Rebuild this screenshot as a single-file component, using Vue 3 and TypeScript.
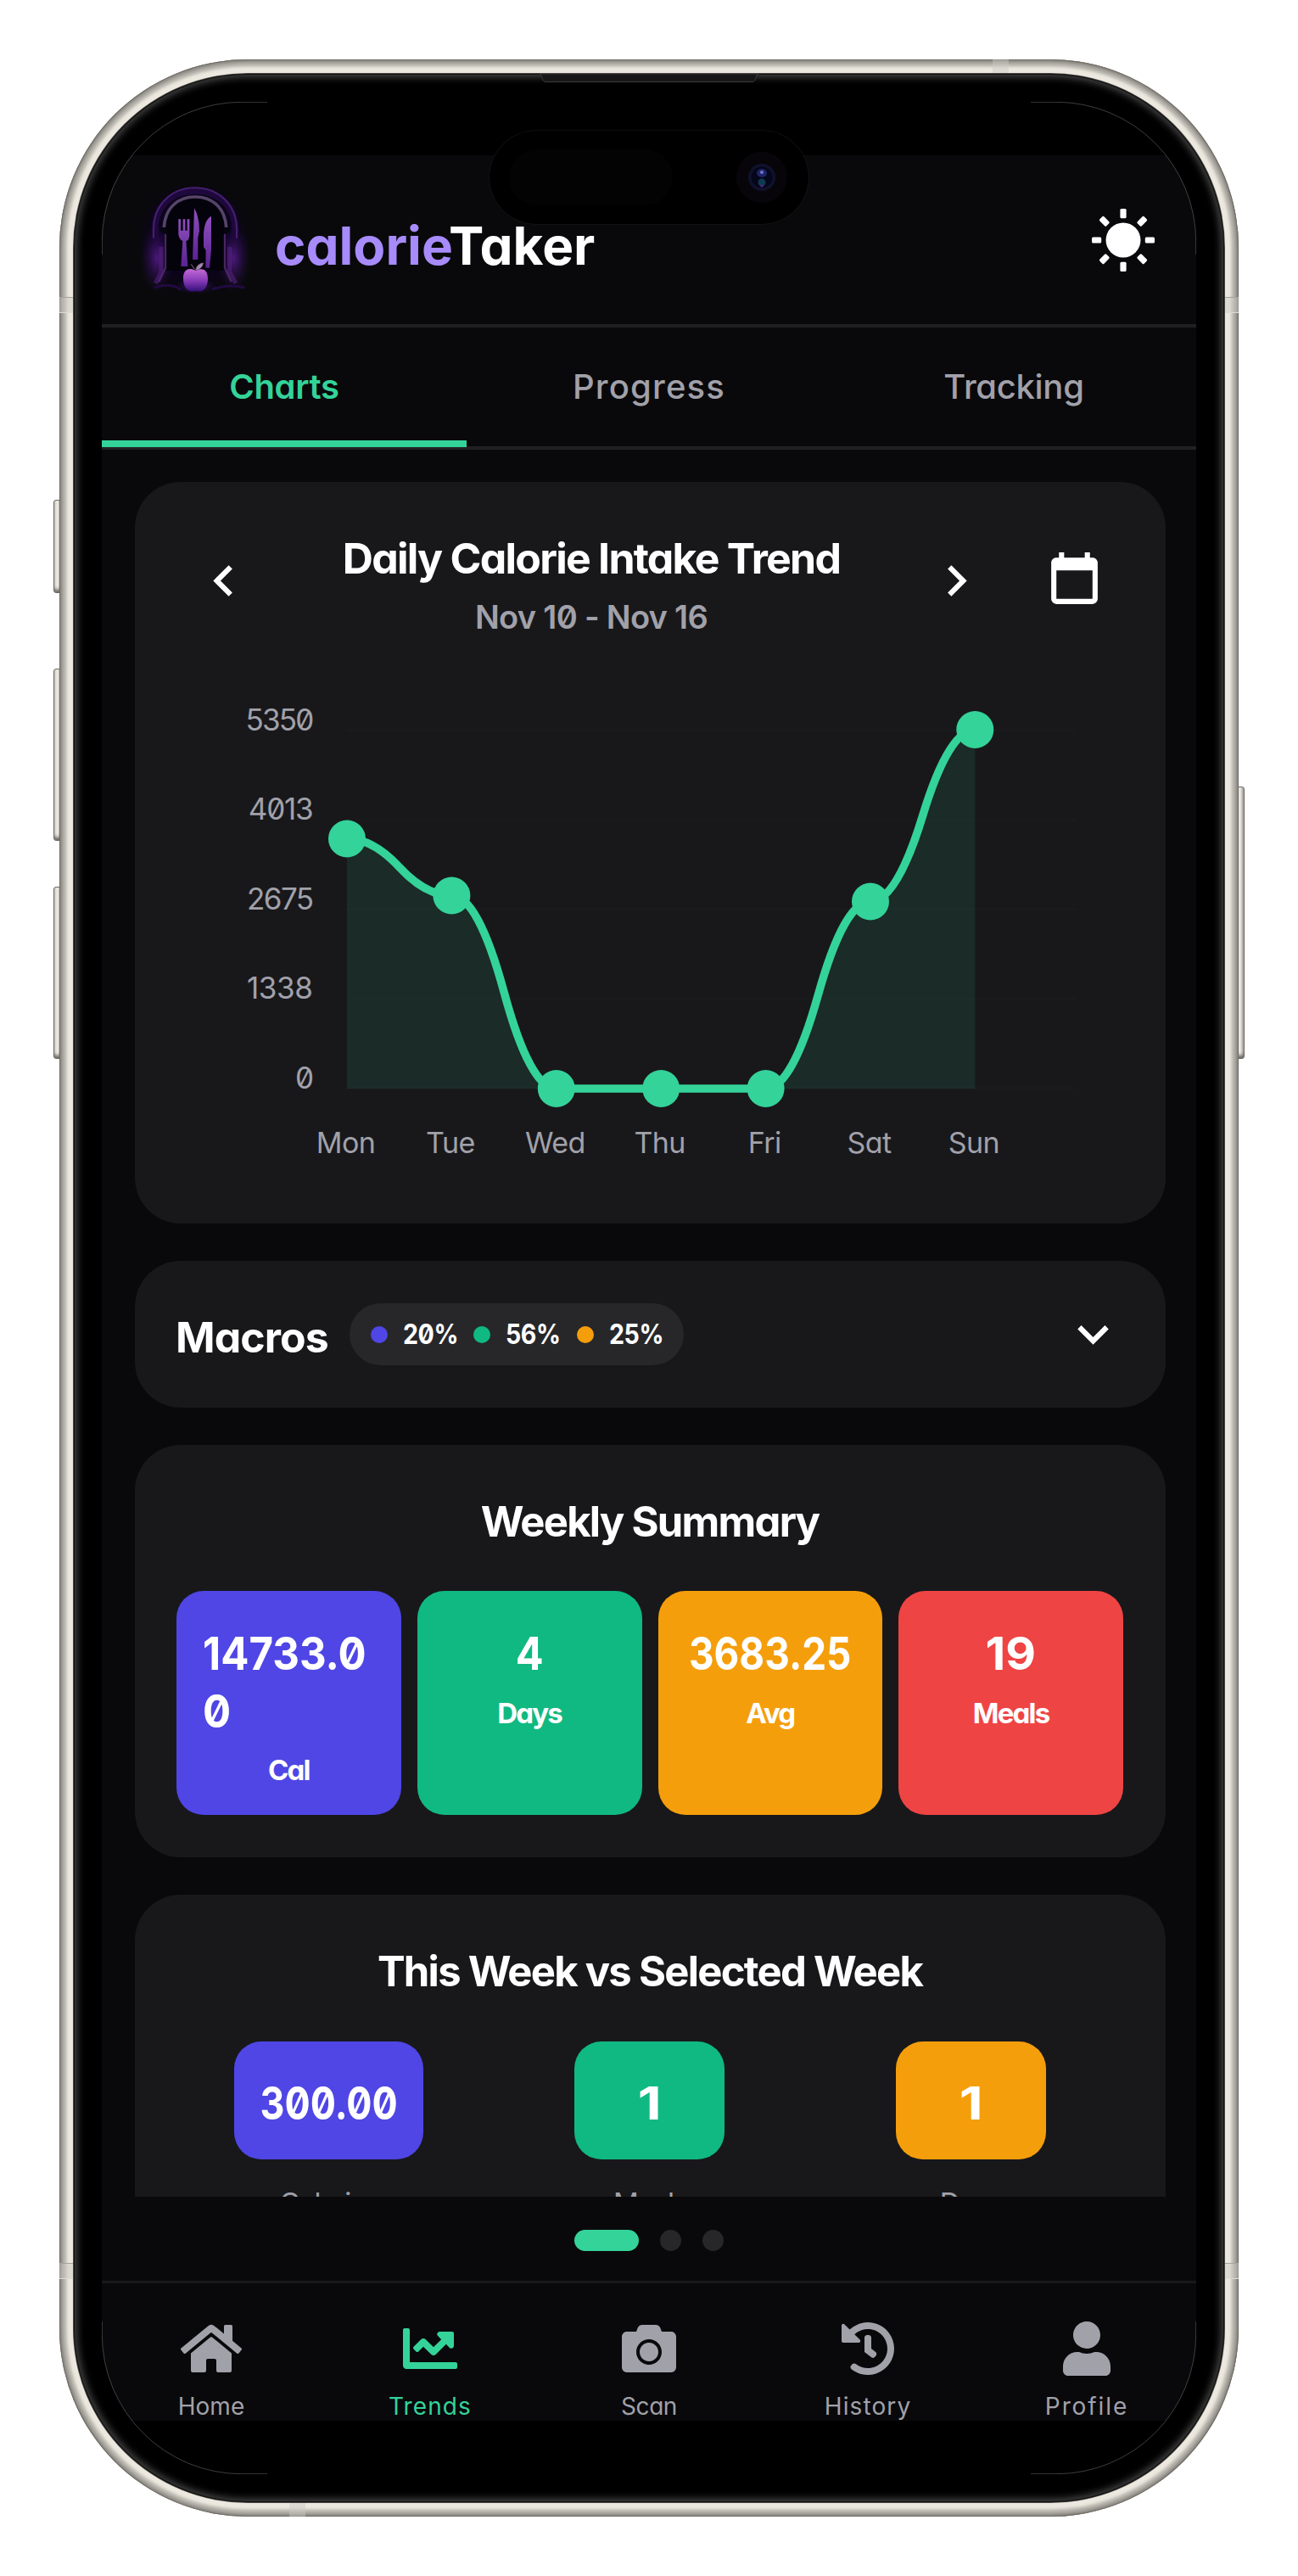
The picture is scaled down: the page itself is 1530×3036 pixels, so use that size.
<script setup lang="ts">
interface Stat { value: string; label: string; color: string; scale: number; wrap?: boolean }
interface NavItem { label: string; width: number; view: string; path: string; spacing: number; active?: boolean }

const tabs = [
  { label: 'Charts', spacing: -0.3, active: true },
  { label: 'Progress', spacing: 1.2 },
  { label: 'Tracking', spacing: -0.3 },
]

const axis = [
  { label: '5350', y: 860.5, spacing: -1.8 },
  { label: '4013', y: 966, spacing: -1.2 },
  { label: '2675', y: 1071.5, spacing: -1.6 },
  { label: '1338', y: 1177, spacing: -0.4 },
  { label: '0', y: 1282.5, spacing: -1.6 },
]

const points = [
  { day: 'Mon', x: 409, y: 988.5 },
  { day: 'Tue', x: 532.4, y: 1055.5 },
  { day: 'Wed', x: 655.8, y: 1283 },
  { day: 'Thu', x: 779.2, y: 1283 },
  { day: 'Fri', x: 902.6, y: 1283 },
  { day: 'Sat', x: 1026, y: 1062.5 },
  { day: 'Sun', x: 1149.3, y: 860 },
]

// Each segment is a pair of quadratic curves that meet at its midpoint
const line = points.slice(1).reduce((d, p, i) => {
  const a = points[i]
  const mx = (a.x + p.x) / 2
  const my = (a.y + p.y) / 2
  return `${d} Q ${(mx + a.x) / 2} ${a.y} ${mx} ${my} Q ${(mx + p.x) / 2} ${p.y} ${p.x} ${p.y}`
}, `M ${points[0].x} ${points[0].y}`)
const area = `${line} L 1149.3 1283 L 409 1283 Z`

const macros = [
  { value: '20%', color: '#4f46e5' },
  { value: '56%', color: '#10b981' },
  { value: '25%', color: '#f59e0b' },
]

const weekly: Stat[] = [
  { value: '14733.00', label: 'Cal', color: '#4f46e5', scale: 0.91, wrap: true },
  { value: '4', label: 'Days', color: '#10b981', scale: 0.9 },
  { value: '3683.25', label: 'Avg', color: '#f59e0b', scale: 0.85 },
  { value: '19', label: 'Meals', color: '#ef4444', scale: 1.02 },
]

const compare: Stat[] = [
  { value: '300.00', label: 'Calories', color: '#4f46e5', scale: 0.83 },
  { value: '1', label: 'Meals', color: '#10b981', scale: 1.2 },
  { value: '1', label: 'Days', color: '#f59e0b', scale: 1.2 },
]

const nav: NavItem[] = [
  { label: 'Home', width: 72, view: '0 0 576 512', spacing: 0, path: 'M280.37 148.26L96 300.11V464a16 16 0 0 0 16 16l112.06-.29a16 16 0 0 0 15.92-16V368a16 16 0 0 1 16-16h64a16 16 0 0 1 16 16v95.64a16 16 0 0 0 16 16.05L464 480a16 16 0 0 0 16-16V300L295.67 148.26a12.19 12.19 0 0 0-15.3 0zM571.6 251.47L488 182.56V44.05a12 12 0 0 0-12-12h-56a12 12 0 0 0-12 12v72.61L318.47 43a48 48 0 0 0-61 0L4.34 251.47a12 12 0 0 0-1.6 16.9l25.5 31A12 12 0 0 0 45.15 301l235.22-193.74a12.19 12.19 0 0 1 15.3 0L530.9 301a12 12 0 0 0 16.9-1.6l25.5-31a12 12 0 0 0-1.7-16.93z' },
  { label: 'Trends', width: 64, view: '0 0 512 512', spacing: 1.1, active: true, path: 'M496 384H64V80c0-8.84-7.16-16-16-16H16C7.16 64 0 71.16 0 80v336c0 17.67 14.33 32 32 32h464c8.84 0 16-7.16 16-16v-32c0-8.84-7.16-16-16-16zM464 96H345.94c-21.38 0-32.09 25.85-16.97 40.97l32.4 32.4L288 242.75l-73.37-73.37c-12.5-12.5-32.76-12.5-45.25 0l-68.69 68.69c-6.25 6.25-6.25 16.38 0 22.63l22.62 22.62c6.25 6.25 16.38 6.25 22.63 0L192 237.25l73.37 73.37c12.5 12.5 32.76 12.5 45.25 0l96-96 32.4 32.4c15.12 15.12 40.97 4.41 40.97-16.97V112c.01-8.84-7.15-16-15.99-16z' },
  { label: 'Scan', width: 64, view: '0 0 512 512', spacing: -0.4, path: 'M512 144v288c0 26.5-21.5 48-48 48H48c-26.5 0-48-21.5-48-48V144c0-26.5 21.5-48 48-48h88l12.3-32.9c7-18.7 24.9-31.1 44.9-31.1h125.5c20 0 37.9 12.4 44.9 31.1L376 96h88c26.5 0 48 21.5 48 48zM376 288c0-66.2-53.8-120-120-120s-120 53.8-120 120 53.8 120 120 120 120-53.8 120-120zm-32 0c0 48.5-39.5 88-88 88s-88-39.5-88-88 39.5-88 88-88 88 39.5 88 88z' },
  { label: 'History', width: 64, view: '0 0 512 512', spacing: 1.1, path: 'M504 255.531c.253 136.64-111.18 248.372-247.82 248.468-59.015.042-113.223-20.53-155.822-54.911-11.077-8.94-11.905-25.541-1.839-35.607l11.267-11.267c8.609-8.609 22.353-9.551 31.891-1.984C173.062 425.135 212.781 440 256 440c101.705 0 184-82.311 184-184 0-101.705-82.311-184-184-184-48.814 0-93.149 18.969-126.068 49.932l50.754 50.754c10.08 10.08 2.941 27.314-11.313 27.314H24c-8.837 0-16-7.163-16-16V38.627c0-14.254 17.234-21.393 27.314-11.314l49.372 49.372C129.209 34.136 189.552 8 256 8c136.81 0 247.747 110.78 248 247.531zm-180.912 78.784l9.823-12.63c8.138-10.463 6.253-25.542-4.21-33.679L288 256.349V152c0-13.255-10.745-24-24-24h-16c-13.255 0-24 10.745-24 24v135.651l65.409 50.874c10.463 8.137 25.541 6.253 33.679-4.21z' },
  { label: 'Profile', width: 56, view: '0 0 448 512', spacing: 1.9, path: 'M224 256c70.7 0 128-57.3 128-128S294.7 0 224 0 96 57.3 96 128s57.3 128 128 128zm89.6 32h-16.7c-22.2 10.2-46.9 16-72.9 16s-50.6-5.8-72.9-16h-16.7C60.2 288 0 348.2 0 422.4V464c0 26.5 21.5 48 48 48h352c26.5 0 48-21.5 48-48v-41.6c0-74.2-60.2-134.4-134.4-134.4z' },
]
</script>

<template>
  <div class="stage">
    <i class="key key-action"></i>
    <i class="key key-up"></i>
    <i class="key key-down"></i>
    <i class="key key-power"></i>
    <div class="frame">
      <i class="band band-tl"></i><i class="band band-tr"></i><i class="band band-bl"></i><i class="band band-br"></i>
      <i class="band band-top"></i><i class="band band-bottom"></i>
      <div class="bezel">
        <svg class="speaker" width="258" height="11" viewBox="0 0 258 11">
          <path d="M0 0 C4 1 2 9 7 9.5 H251 C256 9 254 1 258 0 Z" fill="#171717" stroke="#3a3a3a" stroke-width="1" />
        </svg>
        <div class="screen">
          <div class="app">
            <header class="header">
              <svg class="logo" width="160" height="160" viewBox="0 0 480 480">
                <defs>
                  <radialGradient id="glow"><stop offset="0" stop-color="#5b1e94" stop-opacity=".8" /><stop offset="1" stop-color="#2a0b52" stop-opacity="0" /></radialGradient>
                  <linearGradient id="steel" x1="0" y1="0" x2="0" y2="1"><stop offset="0" stop-color="#8f50bd" /><stop offset="1" stop-color="#5a2293" /></linearGradient>
                  <linearGradient id="apple" x1="0" y1="0" x2="0" y2="1"><stop offset="0" stop-color="#c26ad6" /><stop offset=".5" stop-color="#8a3cb8" /><stop offset="1" stop-color="#35107a" /></linearGradient>
                  <radialGradient id="night"><stop offset=".6" stop-color="#0c021f" /><stop offset="1" stop-color="#09090b" /></radialGradient>
                </defs>
                <rect x="30" y="30" width="410" height="400" fill="url(#night)" />
                <ellipse cx="105" cy="300" rx="60" ry="125" fill="url(#glow)" />
                <ellipse cx="376" cy="300" rx="60" ry="125" fill="url(#glow)" />
                <path d="M98 235 V200 C98 116 160 62 240 62 C320 62 382 116 382 200 V235" fill="none" stroke="#1e083c" stroke-width="24" />
                <path d="M93 230 V200 C93 112 157 52 240 52 C323 52 387 112 387 200 V230" fill="none" stroke="#44206e" stroke-width="6" />
                <path d="M130 345 V198 C130 126 178 84 240 84 C302 84 350 126 350 198 V345 Z" fill="#04030b" />
                <path d="M130 192 C134 122 180 84 240 84 C300 84 346 122 350 192" fill="none" stroke="#57446a" stroke-width="11" />
                <path d="M135 215 V335 L112 385 M345 215 V335 L368 385" fill="none" stroke="#4a2465" stroke-width="7" />
                <path d="M120 260 V350 L100 390 M362 260 V350 L384 390" fill="none" stroke="#5d2587" stroke-width="16" opacity=".5" />
                <path d="M119 202 H140 M341 202 H362" stroke="#07050d" stroke-width="18" />
                <path d="M181 163 h8 v40 h8 v-40 h8 v40 h7 v-40 h8 v55 q0 18 -12 22 L214 330 h-24 L196 240 q-12 -6 -15 -22 Z" fill="url(#steel)" />
                <path d="M237 124 Q255 155 255 205 L250 228 V306 H231 Z" fill="url(#steel)" />
                <path d="M297 152 V270 L291 335 H277 L278 272 L270 262 V215 Q273 165 297 152 Z" fill="url(#steel)" />
                <ellipse cx="242" cy="400" rx="75" ry="28" fill="url(#glow)" />
                <path d="M242 345 C215 330 196 345 198 375 C198 402 215 420 230 418 Q242 414 254 418 C270 420 285 402 285 375 C285 345 270 332 242 345 Z" fill="url(#apple)" />
                <path d="M242 343 Q246 322 268 318 Q266 338 242 343 M226 322 L238 340" fill="#a58aac" stroke="#8b6a98" stroke-width="3" />
                <path d="M95 405 Q150 385 190 412 M300 412 Q350 390 415 405" fill="none" stroke="#210a42" stroke-width="9" />
              </svg>
              <h1 class="brand"><span>calorie</span>Taker</h1>
              <svg class="sun" width="76" height="76" viewBox="-38 -38 76 76" fill="#fff">
                <circle r="20.5" />
                <rect v-for="a in 8" :key="a" x="-3.6" y="-37" width="7.2" height="11.2" rx="1.5" :transform="`rotate(${a * 45})`" />
              </svg>
            </header>

            <nav class="tabs">
              <button v-for="t in tabs" :key="t.label" class="tab" :class="{ active: t.active }" :style="{ letterSpacing: t.spacing + 'px' }">{{ t.label }}</button>
            </nav>

            <main class="content">
              <section class="card trend">
                <div class="trend-head">
                  <svg class="icon" viewBox="0 0 24 24"><path d="M15.41,16.58L10.83,12L15.41,7.41L14,6L8,12L14,18L15.41,16.58Z" /></svg>
                  <div class="trend-title">
                    <h2>Daily Calorie Intake Trend</h2>
                    <p>Nov 10 - Nov 16</p>
                  </div>
                  <svg class="icon" viewBox="0 0 24 24"><path d="M8.59,16.58L13.17,12L8.59,7.41L10,6L16,12L10,18L8.59,16.58Z" /></svg>
                  <svg class="icon calendar" viewBox="0 0 24 24"><path d="M19,19H5V8H19M16,1V3H8V1H6V3H5C3.89,3 3,3.89 3,5V19A2,2 0 0,0 5,21H19A2,2 0 0,0 21,19V5C21,3.89 20.1,3 19,3H18V1" /></svg>
                </div>
                <svg class="chart" width="1215" height="640" viewBox="159 760 1215 640">
                  <path v-for="a in axis" :key="a.label" :d="`M409 ${a.y} H1269`" stroke="#1a1a1d" stroke-width="3" />
                  <path :d="area" fill="#34d399" fill-opacity=".1" />
                  <path :d="line" fill="none" stroke="#34d399" stroke-width="9.5" />
                  <circle v-for="p in points" :key="p.day" :cx="p.x" :cy="p.y" r="22" fill="#34d399" />
                  <text v-for="a in axis" :key="a.label" class="tick tick-y" x="368.5" :y="a.y" text-anchor="end" :style="{ letterSpacing: a.spacing + 'px' }">{{ a.label }}</text>
                  <text v-for="p in points" :key="p.day" class="tick" :x="p.x - 1.5" y="1358.5" text-anchor="middle">{{ p.day }}</text>
                </svg>
              </section>

              <section class="card macros">
                <h2>Macros</h2>
                <div class="pill">
                  <span v-for="m in macros" :key="m.value" class="macro"><i :style="{ background: m.color }"></i><b>{{ m.value }}</b></span>
                </div>
                <svg class="icon expand" viewBox="0 0 24 24"><path d="M7.41,8.58L12,13.17L16.59,8.58L18,10L12,16L6,10L7.41,8.58Z" /></svg>
              </section>

              <section class="card weekly">
                <h2>Weekly Summary</h2>
                <div class="stats">
                  <div v-for="s in weekly" :key="s.label" class="stat" :style="{ background: s.color }">
                    <div class="number" :class="{ wrap: s.wrap }" :style="{ transform: `scaleX(${s.scale})` }">{{ s.value }}</div>
                    <div class="stat-label">{{ s.label }}</div>
                  </div>
                </div>
              </section>

              <section class="card versus">
                <h2>This Week vs Selected Week</h2>
                <div class="columns">
                  <div v-for="s in compare" :key="s.label" class="column">
                    <div class="badge" :class="{ wide: s.value.length > 1 }" :style="{ background: s.color }">
                      <div class="number" :style="{ transform: `scaleX(${s.scale})` }">{{ s.value }}</div>
                    </div>
                    <div class="column-label">{{ s.label }}</div>
                  </div>
                </div>
              </section>
            </main>

            <div class="pager"><i class="current"></i><i></i><i></i></div>

            <footer class="nav">
              <a v-for="n in nav" :key="n.label" class="nav-item" :class="{ active: n.active }">
                <svg :width="n.width" height="64" :viewBox="n.view"><path :d="n.path" /></svg>
                <span :style="{ letterSpacing: n.spacing + 'px' }">{{ n.label }}</span>
              </a>
            </footer>
          </div>
        </div>

        <div class="island">
          <i class="sensor"></i>
          <svg class="camera" width="62" height="62" viewBox="-31 -31 62 62">
            <circle r="30" fill="#08050a" />
            <circle r="16" fill="#10122c" />
            <circle r="12.5" fill="#05061a" />
            <ellipse cy="-5" rx="6" ry="5" fill="#1f2468" />
            <circle cy="-6" r="2" fill="#6f78c4" />
            <ellipse cy="6" rx="4.5" ry="4.5" fill="#0e3a50" />
            <circle cy="10" r="1.6" fill="#6a1f8c" />
          </svg>
        </div>

        <svg class="edges" width="1290" height="2796" viewBox="0 0 1290 2796" fill="none" stroke="#666" stroke-width=".6">
          <path d="M.3 180 V165 A164.7 164.7 0 0 1 165 .3 H195 M1095 .3 H1125 A164.7 164.7 0 0 1 1289.7 165 V180 M1289.7 2616 V2631 A164.7 164.7 0 0 1 1125 2795.7 H1095 M195 2795.7 H165 A164.7 164.7 0 0 1 .3 2631 V2616" />
        </svg>
      </div>
    </div>
  </div>
</template>

<style>
body { margin: 0; background: #fff; }
</style>

<style scoped>
* { box-sizing: border-box; }
h1, h2, p { margin: 0; }
i { display: block; }

.stage {
  position: relative;
  width: 1530px;
  height: 3036px;
  padding: 70px;
  overflow: hidden;
  background: #fff;
  font-family: Inter, "Noto Sans", sans-serif;
  font-feature-settings: "cv11", "zero";
  color: #fff;
}

/* Phone body */
.frame {
  position: relative;
  width: 1390px;
  height: 2896px;
  padding: 17px;
  border-radius: 222px;
  background: #ece8df;
  box-shadow: inset 0 0 0 1px #706d68, inset 0 0 2px 3px #8e8b85, inset 0 0 3px 6px #a9a69f, inset 0 0 3px 9px #c6c3bb;
}
.bezel {
  position: relative;
  width: 1356px;
  height: 2862px;
  padding: 33px;
  border-radius: 205px;
  background: #000;
  box-shadow: 0 0 0 1px #4a4844, inset 0 0 0 1px #111, inset 0 0 9px 4px #454545;
}
.screen {
  width: 1290px;
  height: 2796px;
  padding: 63px 0;
  border-radius: 165px;
  background: #000;
  overflow: hidden;
}
.key {
  position: absolute;
  width: 10px;
  border: 1px solid #6d6a65;
  border-radius: 3px;
  background: linear-gradient(90deg, #c9c7c1, #f1eee8 45%, #a09d97);
  box-shadow: inset 0 -6px 4px -3px #65625d;
}
.key-action { left: 63px; top: 589px; height: 110px; }
.key-up { left: 63px; top: 788px; height: 203px; }
.key-down { left: 63px; top: 1045px; height: 203px; }
.key-power { left: 1457px; top: 927px; height: 321px; }
.band { position: absolute; background: rgba(205, 202, 196, .45); }
.band-tl, .band-tr, .band-bl, .band-br { width: 16px; height: 19px; border-top: 1px solid #a5a29c; border-bottom: 1px solid #dedbd4; }
.band-tl { left: 0; top: 280px; }
.band-tr { right: 0; top: 280px; }
.band-bl { left: 0; top: 2597px; }
.band-br { right: 0; top: 2597px; }
.band-top { left: 1100px; top: 0; width: 19px; height: 16px; }
.band-bottom { left: 271px; bottom: 0; width: 19px; height: 16px; }
.speaker { position: absolute; left: 549px; top: 0; }
.edges { position: absolute; left: 33px; top: 33px; }
.island {
  position: absolute;
  left: 490px;
  top: 67px;
  width: 376px;
  height: 110px;
  border-radius: 55px;
  background: #000;
  box-shadow: 0 0 0 .5px #1c1c1c;
}
.sensor { position: absolute; left: 23px; top: 22px; width: 193px; height: 66px; border-radius: 33px; background: #030303; }
.camera { position: absolute; left: 290px; top: 24px; }

/* Application */
.app { height: 2670px; background: #09090b; overflow: hidden; }
.header {
  display: flex;
  align-items: center;
  height: 203px;
  padding: 0 48px 0 30px;
  border-bottom: 4px solid #202023;
}
.logo { margin-top: 3px; }
.brand { margin-left: 14px; padding-top: 15px; font-size: 62px; line-height: 76px; font-weight: 700; }
.brand span { color: #a78bfa; }
.sun { margin-left: auto; }

.tabs { display: flex; height: 144px; border-bottom: 4px solid #202023; }
.tab {
  position: relative;
  flex: 1;
  padding: 0 0 2px;
  border: 0;
  background: none;
  color: #a1a1aa;
  font: 500 40px Inter, sans-serif;
  font-feature-settings: "cv11", "zero";
}
.tab.active { color: #34d399; font-weight: 600; }
.tab.active::after { content: ""; position: absolute; left: 0; right: 0; bottom: -1px; height: 8px; background: #34d399; }

.content {
  display: flex;
  flex-direction: column;
  gap: 44px;
  height: 2059px;
  padding: 38px 36.5px 0 38.5px;
  overflow: hidden;
}
.card { flex: none; border-radius: 54px; background: #18181b; }
.card h2 { font-size: 49px; line-height: 60px; font-weight: 700; text-align: center; letter-spacing: -1.75px; white-space: nowrap; }
.icon { flex: none; width: 73px; height: 73px; fill: #fff; }

.trend { height: 874px; padding-top: 59.5px; }
.trend-head { display: flex; align-items: center; height: 123px; padding: 0 71px 0 68px; }
.trend-head .icon { margin-top: -9px; }
.trend-title { flex: 1; padding-left: 4px; text-align: center; }
.card .trend-title h2 { font-size: 50px; }
.trend-title p { margin-top: 17.5px; font-size: 38px; line-height: 45px; font-weight: 600; letter-spacing: -.7px; color: #a1a1aa; }
.trend-head .calendar { margin-left: 66px; }
.chart { display: block; margin-top: 9.5px; }
.tick { font-size: 34px; letter-spacing: -.6px; fill: #a1a1aa; }
.tick-y { font-size: 35px; }

.macros { display: flex; align-items: center; height: 173px; padding: 0 49px 0 48.5px; }
.card.macros h2 { width: 205px; padding-top: 6px; text-align: left; font-size: 50px; letter-spacing: -.9px; }
.pill { display: flex; align-items: center; width: 394px; height: 73px; padding-left: 24.5px; border-radius: 37px; background: #27272a; }
.macro { display: flex; align-items: center; width: 121.5px; }
.macro i { width: 20px; height: 20px; border-radius: 50%; }
.macro b { margin-left: 18px; font-size: 32.5px; line-height: 40px; padding-top: 1px; font-weight: 700; letter-spacing: -.5px; transform: scaleX(.88); transform-origin: left; }
.expand { margin-left: auto; }

.weekly { height: 486px; padding: 61px 49.5px 0; }
.stats { display: flex; gap: 19px; margin-top: 51px; }
.stat { display: flex; flex-direction: column; align-items: center; flex: 1; height: 264px; padding-top: 40px; border-radius: 32px; }
.number { font-size: 54px; line-height: 67.5px; font-weight: 700; white-space: nowrap; }
.number.wrap { width: 218px; margin-left: 15px; transform-origin: left; white-space: normal; word-break: break-all; }
.stat-label { margin-top: 15px; font-size: 33px; line-height: 42px; font-weight: 700; letter-spacing: -1.8px; }

.versus { height: 486px; padding: 61px 40px 0; }
.columns { display: flex; margin-top: 52px; }
.column { display: flex; flex-direction: column; align-items: center; flex: 1; }
.badge { display: flex; align-items: center; justify-content: center; width: 177px; height: 139px; padding-top: 6px; border-radius: 32px; }
.badge.wide { width: 223px; }
.column-label { margin-top: 30px; font-size: 33px; line-height: 42px; letter-spacing: -1.7px; color: #a1a1aa; }

.pager { display: flex; align-items: center; justify-content: center; gap: 25px; height: 99px; padding-top: 3px; }
.pager i { width: 25px; height: 25px; border-radius: 13px; background: #27272a; }
.pager .current { width: 76px; background: #34d399; }

.nav { display: flex; height: 165px; padding-top: 45px; border-top: 3px solid #18181b; overflow: hidden; }
.nav-item { display: flex; flex-direction: column; align-items: center; flex: 1; color: #a1a1aa; fill: #a1a1aa; }
.nav-item svg { display: block; flex: none; }
.nav-item span { margin-top: 19px; font-size: 28px; line-height: 34px; }
.nav-item.active { color: #34d399; fill: #34d399; }
</style>
